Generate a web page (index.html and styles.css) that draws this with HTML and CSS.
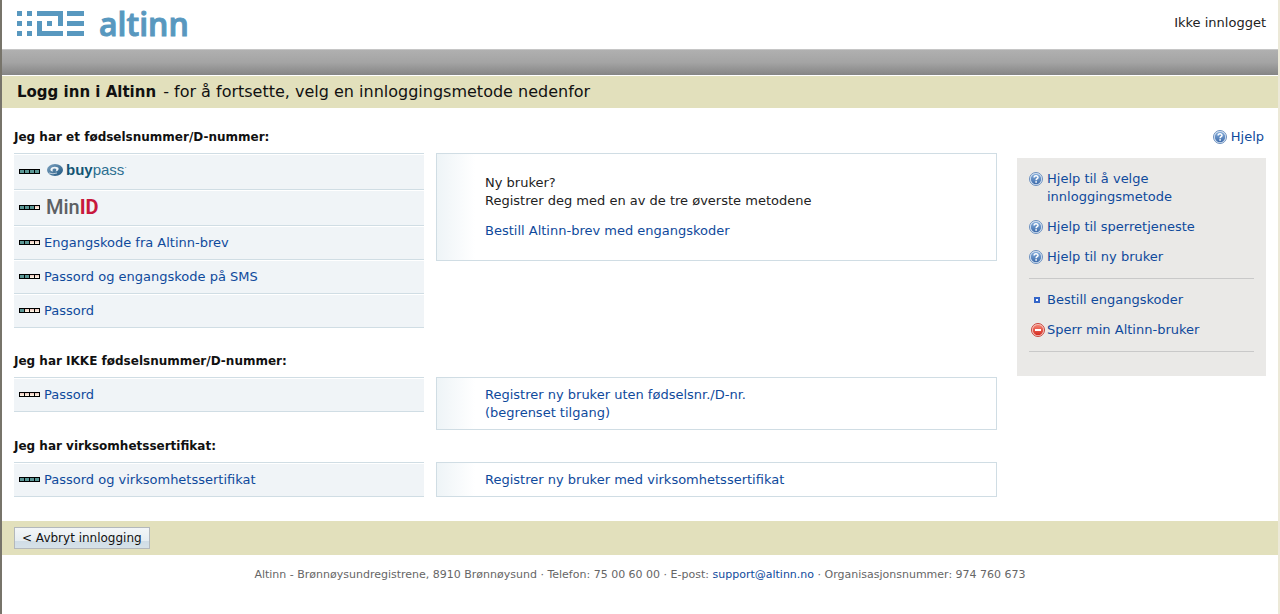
FILE: index.html
```html
<!DOCTYPE html>
<html lang="no">
<head>
<meta charset="utf-8">
<title>Logg inn i Altinn</title>
<link rel="stylesheet" href="styles.css">
</head>
<body>
<svg class="defs" aria-hidden="true">
  <defs>
    <linearGradient id="blue" x1="0" y1="0" x2="0" y2="1"><stop offset="0" stop-color="#86aedb"/><stop offset="1" stop-color="#3e6cab"/></linearGradient>
    <linearGradient id="red" x1="0" y1="0" x2="0" y2="1"><stop offset="0" stop-color="#f58474"/><stop offset="1" stop-color="#d42a20"/></linearGradient>
    <linearGradient id="swirl" x1="0" y1="0" x2="1" y2="1"><stop offset="0" stop-color="#7fa3c0"/><stop offset="1" stop-color="#1d5580"/></linearGradient>
    <linearGradient id="empty" x1="0" y1="0" x2="0" y2="1"><stop offset="0" stop-color="#ecc4bc"/><stop offset="1" stop-color="#fffbe8"/></linearGradient>
    <symbol id="help" viewBox="0 0 14 14">
      <circle cx="7" cy="7" r="6.5" fill="#dfe9f4" stroke="#6a8fbe"/>
      <circle cx="7" cy="7" r="5.2" fill="url(#blue)"/>
      <path d="M5.1 5.6C5.1 3.3 9 3.3 9 5.5 9 6.8 7.1 6.7 7.1 8.3" fill="none" stroke="#fff" stroke-width="1.5"/>
      <rect x="6.3" y="9.2" width="1.6" height="1.5" fill="#fff"/>
    </symbol>
    <symbol id="stop" viewBox="0 0 14 14">
      <circle cx="7" cy="7" r="6.5" fill="#f7cfc8" stroke="#c8423a"/>
      <circle cx="7" cy="7" r="5.2" fill="url(#red)"/>
      <rect x="4" y="6" width="6" height="2" fill="#fff"/>
    </symbol>
    <symbol id="on" viewBox="0 0 6 5"><rect width="6" height="5" fill="#000"/><rect x="1" y="1" width="4" height="3" fill="#5a9694"/></symbol>
    <symbol id="off" viewBox="0 0 6 5"><rect width="6" height="5" fill="#000"/><rect x="1" y="1" width="4" height="3" fill="url(#empty)"/></symbol>
  </defs>
</svg>
<div class="page">
  <header class="top">
    <svg class="logo" width="174" height="32" viewBox="0 0 174 32" role="img" aria-label="altinn">
      <g fill="#5898bf">
        <path d="M0 3h5v5h-5zM10 3h5v5h-5zM0 13h5v5h-5zM10 13h5v5h-5zM0 23h5v5h-5zM10 23h5v5h-5z"/>
        <path d="M20 3H46V18H41V8H20zM20 13H25V23H46V28H20zM30 13h5v5h-5zM50 3h17v5H50zM50 13h17v5H50zM50 23h17v5H50z"/>
        <text class="logo-text" x="82" y="28">altinn</text>
      </g>
    </svg>
    <span>Ikke innlogget</span>
  </header>
  <div class="bar"></div>
  <h1 class="title"><strong>Logg inn i Altinn</strong> - for å fortsette, velg en innloggingsmetode nedenfor</h1>
  <div class="content">
    <main class="methods">
      <section class="group">
        <h2>Jeg har et fødselsnummer/D-nummer:</h2>
        <div class="columns">
          <ul class="list">
            <li class="tall"><svg class="level" viewBox="0 0 21 5"><use href="#on" width="6" height="5"/><use href="#on" x="5" width="6" height="5"/><use href="#on" x="10" width="6" height="5"/><use href="#on" x="15" width="6" height="5"/></svg>
              <a class="brand" href="#"><svg width="82" height="24" viewBox="0 0 82 24" role="img" aria-label="buypass">
                <ellipse cx="8" cy="10" rx="8" ry="6" fill="url(#swirl)"/>
                <path d="M3.5 9C4.500 6.500 8.500 6 11 7.500 12.500 9 11 11 8.500 11.500 10 10 9.500 8.500 7.500 8.500 5.500 8.500 5 10 6 11.500 4 11.500 3 10.500 3.500 9z" fill="#f0f4f7"/>
                <path d="M0 6.500L4 4M2 13Q6 14.500 10 13" fill="none" stroke="#f0f4f7" stroke-width=".7"/>
                <text class="buypass" x="19" y="15"><tspan class="buy">buy</tspan>pass<tspan class="mark" dy="-5">·</tspan></text></svg></a></li>
            <li class="tall"><svg class="level" viewBox="0 0 21 5"><use href="#on" width="6" height="5"/><use href="#on" x="5" width="6" height="5"/><use href="#on" x="10" width="6" height="5"/><use href="#off" x="15" width="6" height="5"/></svg>
              <a class="brand" href="#"><svg width="64" height="28" viewBox="0 0 64 28" role="img" aria-label="MinID"><text class="minid" x="-1" y="20">Min<tspan class="id">ID</tspan></text></svg></a></li>
            <li><svg class="level" viewBox="0 0 21 5"><use href="#on" width="6" height="5"/><use href="#on" x="5" width="6" height="5"/><use href="#off" x="10" width="6" height="5"/><use href="#off" x="15" width="6" height="5"/></svg><a href="#">Engangskode fra Altinn-brev</a></li>
            <li><svg class="level" viewBox="0 0 21 5"><use href="#on" width="6" height="5"/><use href="#on" x="5" width="6" height="5"/><use href="#off" x="10" width="6" height="5"/><use href="#off" x="15" width="6" height="5"/></svg><a href="#">Passord og engangskode på SMS</a></li>
            <li><svg class="level" viewBox="0 0 21 5"><use href="#on" width="6" height="5"/><use href="#off" x="5" width="6" height="5"/><use href="#off" x="10" width="6" height="5"/><use href="#off" x="15" width="6" height="5"/></svg><a href="#">Passord</a></li>
          </ul>
          <div class="info large">
            <p>Ny bruker?<br>Registrer deg med en av de tre øverste metodene</p>
            <p><a href="#">Bestill Altinn-brev med engangskoder</a></p>
          </div>
        </div>
      </section>
      <section class="group close">
        <h2>Jeg har IKKE fødselsnummer/D-nummer:</h2>
        <div class="columns">
          <ul class="list">
            <li><svg class="level" viewBox="0 0 21 5"><use href="#off" width="6" height="5"/><use href="#off" x="5" width="6" height="5"/><use href="#off" x="10" width="6" height="5"/><use href="#off" x="15" width="6" height="5"/></svg><a href="#">Passord</a></li>
          </ul>
          <div class="info"><a href="#">Registrer ny bruker uten fødselsnr./D-nr.<br>(begrenset tilgang)</a></div>
        </div>
      </section>
      <section class="group">
        <h2>Jeg har virksomhetssertifikat:</h2>
        <div class="columns">
          <ul class="list">
            <li><svg class="level" viewBox="0 0 21 5"><use href="#on" width="6" height="5"/><use href="#on" x="5" width="6" height="5"/><use href="#on" x="10" width="6" height="5"/><use href="#on" x="15" width="6" height="5"/></svg><a href="#">Passord og virksomhetssertifikat</a></li>
          </ul>
          <div class="info"><a href="#">Registrer ny bruker med virksomhetssertifikat</a></div>
        </div>
      </section>
    </main>
    <aside class="side">
      <a class="help-link" href="#"><svg class="icon"><use href="#help"/></svg>Hjelp</a>
      <div class="panel">
        <a href="#"><svg class="icon"><use href="#help"/></svg><span>Hjelp til å velge innloggingsmetode</span></a>
        <a href="#"><svg class="icon"><use href="#help"/></svg><span>Hjelp til sperretjeneste</span></a>
        <a href="#"><svg class="icon"><use href="#help"/></svg><span>Hjelp til ny bruker</span></a>
        <hr>
        <a href="#"><svg class="icon" viewBox="0 0 14 14"><rect x="6" y="5" width="4" height="4" fill="#fff" stroke="#3465c8" stroke-width="2"/></svg><span>Bestill engangskoder</span></a>
        <a class="block" href="#"><svg class="icon"><use href="#stop"/></svg><span>Sperr min Altinn-bruker</span></a>
        <hr>
      </div>
    </aside>
  </div>
  <div class="actions"><button type="button">&lt; Avbryt innlogging</button></div>
  <footer class="footer">Altinn - Brønnøysundregistrene, 8910 Brønnøysund · Telefon: 75 00 60 00 · E-post: <a href="#">support@altinn.no</a> · Organisasjonsnummer: 974 760 673</footer>
</div>
</body>
</html>
```
FILE: styles.css
```css
* { box-sizing: border-box; }
body {
  margin: 0;
  background: #fff;
  color: #222;
  font: 13px/18px Verdana, "DejaVu Sans", sans-serif;
}
a { color: #0f4a9c; text-decoration: none; }
h1, h2, p, ul { margin: 0; padding: 0; }
.defs { position: absolute; width: 0; height: 0; }
.page {
  min-height: 100vh;
  border-right: 2px solid #ece9d8;
  border-left: 2px solid #77746a;
}
.top {
  display: flex;
  justify-content: space-between;
  height: 49px;
  padding: 8px 12px 0 15px;
}
.top span { padding-top: 6px; }
.logo { display: block; overflow: visible; }
.logo-text { font: 600 32px "Open Sans", sans-serif; stroke: #5898bf; }
.bar {
  height: 26px;
  border-top: 1px solid #c6c6c6;
  background: linear-gradient(#b0b0b0, #a4a4a4 50%, #858585);
}
.title {
  margin-top: 1px;
  padding: 4px 15px;
  background: #e2e0bc;
  color: #111;
  font-size: 16px;
  font-weight: 400;
  line-height: 24px;
}
.title strong { margin-right: 2px; font-size: 15px; }
.content {
  display: grid;
  grid-template-columns: 1fr 249px;
  gap: 20px;
  padding: 20px 12px 0;
}
.group { margin-bottom: 24px; }
.group.close { margin-bottom: 7px; }
.group h2 {
  margin-bottom: 7px;
  color: #111;
  font-size: 12px;
  line-height: 18px;
}
.columns {
  display: grid;
  grid-template-columns: 410px 1fr;
  align-items: start;
  gap: 12px;
}
.list { list-style: none; border-bottom: 1px solid #d0dde4; }
.list li {
  display: flex;
  align-items: center;
  height: 34px;
  padding-left: 5px;
  border-top: 1px solid #d0dde4;
  background: #f0f4f7;
  box-shadow: inset 0 1px #fff;
}
.list .tall { height: 36px; }
.level { width: 21px; height: 5px; margin-right: 4px; }
.brand { display: flex; margin-left: 3px; }
.brand svg { overflow: visible; }
.buypass { font: 15px "Liberation Sans", Arial, sans-serif; fill: #2d6f91; }
.buy { font-weight: 700; fill: #125574; }
.mark { font-size: 8px; }
.minid { font: 500 20px Roboto, sans-serif; fill: #5d6064; }
.id { font-weight: 700; fill: #c8193c; }
.info {
  padding: 8px 20px 7px 48px;
  border: 1px solid #d0dde4;
  background: linear-gradient(90deg, #eef4f7, #fff 38px);
}
.info.large { padding: 20px 20px 20px 48px; }
.info p + p { margin-top: 12px; }
.side { display: flex; flex-direction: column; }
.help-link {
  display: flex;
  align-self: flex-end;
  align-items: center;
  gap: 4px;
  margin-right: 2px;
}
.icon { flex: none; width: 14px; height: 14px; }
.panel {
  display: grid;
  gap: 12px;
  margin-top: 12px;
  padding: 12px 12px 24px;
  background: #eae9e7;
}
.panel a { display: flex; gap: 4px; padding-right: 60px; }
.panel a:nth-of-type(n + 2) { padding-right: 0; }
.panel .icon { margin-top: 2px; }
.panel .block { gap: 2px; padding-left: 2px; }
.panel hr { width: 100%; height: 1px; margin: 0; border: 0; background: #c9c9c9; }
.actions { padding: 6px 12px; background: #e2e0bc; }
.actions button {
  display: block;
  height: 22px;
  padding: 0 7px;
  border: 1px solid #b3b8bc;
  background: linear-gradient(#f3f6f8, #e6edf1 65%, #d0dde6 65%, #d6e1e8);
  color: #111;
  font: inherit;
  font-size: 12px;
}
.footer { padding: 11px 12px; color: #666; font-size: 11px; text-align: center; }
```
